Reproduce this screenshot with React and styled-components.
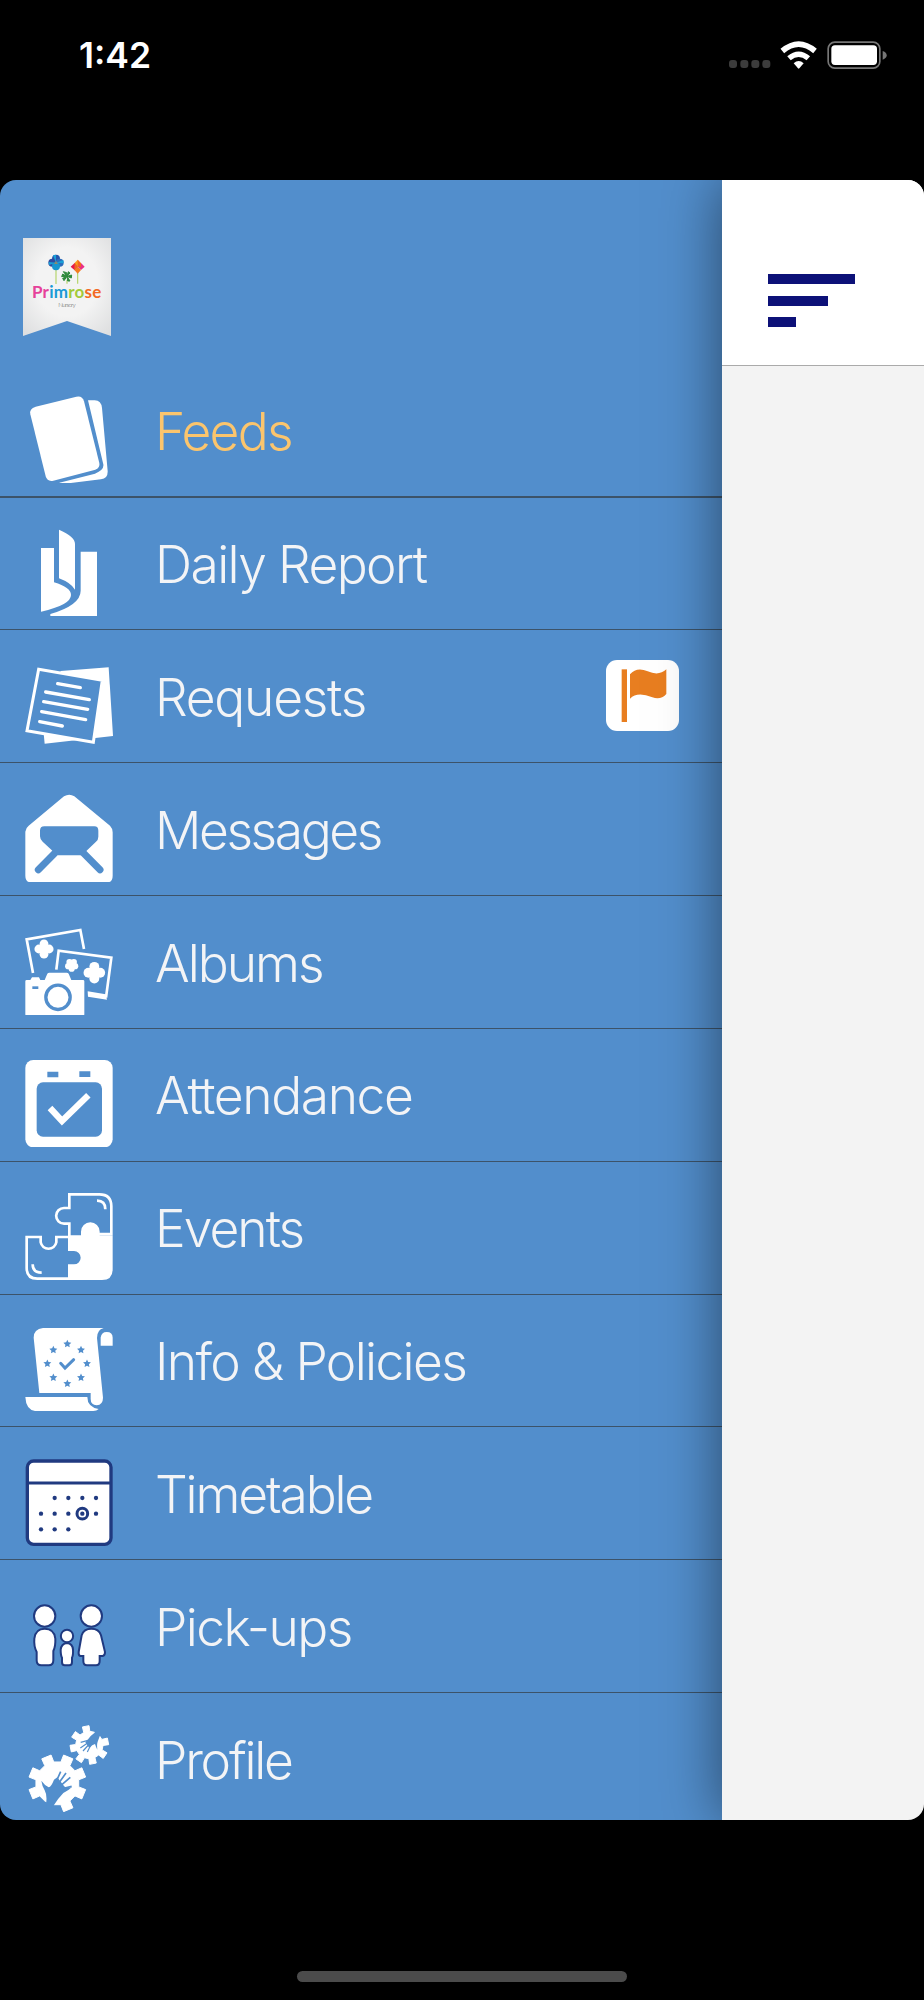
import styled, { createGlobalStyle } from 'styled-components';

const BLUE = '#528ecc';
const NAVY = '#203a80';

const GlobalStyle = createGlobalStyle`
  * {
    box-sizing: border-box;
  }
  body {
    margin: 0;
    background: #000;
  }
  svg {
    display: block;
  }
`;

const SScreen = styled.div`
  display: flex;
  flex-direction: column;
  width: 924px;
  height: 2000px;
  background: #000;
  font-family: Inter, 'Liberation Sans', sans-serif;
`;
const SStatusBar = styled.header`
  display: flex;
  justify-content: space-between;
  height: 180px;
  padding: 34px 37px 0 79px;
`;
const STime = styled.span`
  height: 44px;
  color: #fff;
  font-size: 35.5px;
  font-weight: 600;
  line-height: 44px;
`;
const SStatusIcons = styled.div`
  margin-top: 4px;
`;
const SFrame = styled.div`
  display: flex;
  height: 1640px;
  border-radius: 16px;
  overflow: hidden;
`;
const SDrawer = styled.nav`
  width: 722px;
  background: ${BLUE};
`;
const SDrawerHeader = styled.div`
  height: 184.7px;
  padding: 57.5px 0 0 22.5px;
`;
const SMenu = styled.ul`
  margin: 0;
  padding: 0;
  list-style: none;
`;
const SMenuItem = styled.li`
  display: flex;
  align-items: flex-start;
  height: 132.85px;
  padding: 30.5px 43px 0 25px;
  border-bottom: ${({ $active }) => ($active ? 2 : 1)}px solid #3c5369;
`;
const SLabel = styled.span`
  flex: 1;
  margin: 4px 0 0 42px;
  color: ${({ $active }) => ($active ? '#fbc56d' : '#f3f4f6')};
  font-size: 51.5px;
  font-weight: 300;
  line-height: 64px;
  letter-spacing: ${({ $tracking }) => $tracking}px;
  white-space: nowrap;
`;
const SBadge = styled.span`
  display: flex;
  align-items: center;
  justify-content: center;
  width: 73px;
  height: 71px;
  margin-top: -1px;
  padding: 1px 0 0 2px;
  border-radius: 11px;
  background: #fff;
`;
const SPage = styled.main`
  position: relative;
  flex: 1;
  background: #f3f3f3;
  box-shadow: 0 0 56px rgba(0, 0, 0, 0.5);
`;
const SPageHeader = styled.div`
  height: 186px;
  padding: 94px 0 0 46px;
  background: #fff;
  border-bottom: 1px solid #aaa;
`;
const SHamburger = styled.div`
  display: flex;
  flex-direction: column;
  gap: 11.5px;
`;
const SBar = styled.span`
  width: ${({ $width }) => $width}px;
  height: 10px;
  background: #0d1178;
`;
const SHomeIndicator = styled.div`
  width: 330px;
  height: 11px;
  margin: 151px auto 0;
  border-radius: 6px;
  background: #4b4b4b;
`;

const Icon = ({ origin, children }) => (
  <svg width="88" height="88" viewBox={`75 ${origin} 264 264`} fill="#fff">
    {children}
  </svg>
);

const points = (list) => list.map(([x, y]) => `${x.toFixed(1)},${y.toFixed(1)}`).join(' ');

const polar = (cx, cy, r, deg) => {
  const a = (deg * Math.PI) / 180;
  return [cx + r * Math.cos(a), cy + r * Math.sin(a)];
};

const gear = (cx, cy, inner, outer, offset, skip) => {
  const list = [];
  for (let i = 0; i < 8; i += 1) {
    const a = offset + i * 45;
    list.push(polar(cx, cy, inner, a - 13));
    if (i !== skip) {
      list.push(polar(cx, cy, outer, a - 10), polar(cx, cy, outer, a + 10));
    }
    list.push(polar(cx, cy, inner, a + 13));
  }
  return points(list);
};

const star = (cx, cy) => {
  const list = [];
  for (let i = 0; i < 10; i += 1) {
    list.push(polar(cx, cy, i % 2 ? 6 : 12.5, -90 + i * 36));
  }
  return points(list);
};

const Flower = ({ x, y, r, petals = 4, turn = 0 }) => (
  <g>
    <circle cx={x} cy={y} r={r} />
    {Array.from({ length: petals }, (_, i) => {
      const [cx, cy] = polar(x, y, r, turn - 90 + (i * 360) / petals);
      return <circle key={i} cx={cx} cy={cy} r={r * 0.85} />;
    })}
  </g>
);

const FeedsIcon = () => (
  <Icon origin={524}>
    <path d="M107 559 L229 529 Q247 525 252 543 L298 728 Q301 742 286 748 L160 781 Q142 785 137 768 L91 582 Q87 565 107 559Z" />
    <path d="M264 540 H284 Q304 541 306 563 L323 752 Q324 774 303 777 L196 790 Q185 790 178 787 L285 760 Q316 748 309 728Z" />
  </Icon>
);

const ReportIcon = () => (
  <Icon origin={112}>
    <path d="M123 172 H162 V275 Q213 290 213 313 Q213 343 123 363Z" />
    <path d="M177 117 Q225 137 225 160 V297 Q212 276 177 263Z" />
    <path d="M242 183 H291 V379 H151 V370 Q242 343 242 300Z" />
  </Icon>
);

const RequestsIcon = () => (
  <Icon origin={511}>
    <path d="M182 541 L326 530 L339 736 L134 759 L131 728Z" />
    <path d="M116 536 L307 569 L280 755 L81 720Z" fill={BLUE} stroke="#fff" strokeWidth="9" />
    <path
      d="M173 579 L241 591 M137 604 L268 627 M131 633 L263 656 M125 663 L257 687 M119 693 L187 706"
      stroke="#fff"
      strokeWidth="10"
      strokeLinecap="round"
    />
  </Icon>
);

const MessagesIcon = () => (
  <Icon origin={70}>
    <path d="M76 183 Q77 172 86 165 L192 77 Q208 68 223 77 L330 165 Q338 173 338 185 V315 Q338 336 318 336 H97 Q76 336 76 315Z" />
    <path
      d="M133 167 H283 Q295 167 295 180 V198 Q295 207 288 213 L259 241 L243 254 H174 L158 241 L128 213 Q120 206 120 197 V180 Q120 167 133 167Z"
      fill={BLUE}
    />
    <path d="M115 297 L167 245 M300 297 L248 245" stroke={BLUE} strokeWidth="21" strokeLinecap="round" />
  </Icon>
);

const AlbumsIcon = () => (
  <Icon origin={468}>
    <path d="M99 606 L80 505 L241 477 L252 534" fill="none" stroke="#fff" strokeWidth="8" />
    <path d="M169 596 L176 539 L334 560 L318 680" fill="none" stroke="#fff" strokeWidth="8" />
    <path d="M263 661 L317 670 L321 686 L264 677Z" />
    <Flower x={132} y={534} r={15.5} />
    <Flower x={215} y={582} r={11} petals={5} turn={36} />
    <Flower x={283} y={605} r={17.5} />
    <path d="M80 627 H91 L96 619 H117 L121 627 H134 L142 608 Q144 605 148 605 H200 Q204 605 206 608 L214 627 H249 Q253 627 253 631 V730 Q253 734 249 734 H80 Q76 734 76 730 V631 Q76 627 80 627Z" />
    <rect x="97" y="646" width="18" height="8" fill={BLUE} />
    <circle cx="174" cy="679" r="36.5" fill="none" stroke={BLUE} strokeWidth="10" />
  </Icon>
);

const AttendanceIcon = () => (
  <Icon origin={87}>
    <rect x="76" y="90" width="262" height="262" rx="24" />
    <path d="M142 125 h33 v17 h-33Z M238 124 h33 v17 h-33Z" fill={BLUE} />
    <rect x="110" y="157" width="196" height="163" rx="19" fill={BLUE} />
    <path d="M150 234 L186 273 L265 196" fill="none" stroke="#fff" strokeWidth="19" />
  </Icon>
);

const EventsIcon = () => (
  <Icon origin={486}>
    <g fill="none" stroke="#fff" strokeWidth="8">
      <path d="M208 618 V581 H192 A23 23 0 0 1 192 534 H208 V493 H298 Q334 493 334 529 V612 H296" />
      <path d="M207 621 H169 V637 A24 24 0 0 1 122 637 V621 H80 V714 Q80 746 112 746 H207" />
      <path d="M291 512 Q316 512 316 538 M98 703 Q98 728 125 728" />
    </g>
    <path d="M204 616 H243 V605 A28 28 0 0 1 299 605 V616 H338 V718 Q338 750 306 750 H204 V703 H222 A20 20 0 0 0 222 663 H204Z" />
  </Icon>
);

const InfoIcon = () => (
  <Icon origin={74}>
    <path d="M129 83 H311 Q291 88 291 113 L309 292 Q309 313 290 315 Q272 313 272 296 V278 H118 L101 112 Q101 86 129 83Z" />
    <path d="M302 136 V112 Q304 95 320 95 Q338 95 338 112 V136Z" />
    <path d="M76 290 H262 Q262 320 296 326 Q290 332 280 332 H105 Q78 328 76 290Z" />
    <g fill={BLUE}>
      {[[202, 131], [243, 149], [261, 190], [243, 232], [202, 250], [160, 232], [142, 190], [160, 149]].map(([x, y]) => (
        <polygon key={`${x}-${y}`} points={star(x, y)} />
      ))}
    </g>
    <path d="M182 189 L195 203 L221 178" fill="none" stroke={BLUE} strokeWidth="9" strokeLinecap="round" />
  </Icon>
);

const TimetableIcon = () => (
  <Icon origin={473}>
    <rect x="82" y="482" width="251" height="250" rx="19" stroke={NAVY} strokeWidth="10" />
    <path d="M82 548 H333" stroke={NAVY} strokeWidth="9" />
    <g fill={NAVY}>
      {[[164, 593], [205, 593], [247, 593], [288, 593], [123, 640], [164, 640], [205, 640], [247, 640], [288, 640], [123, 687], [164, 687], [205, 687]].map(([x, y]) => (
        <circle key={`${x}-${y}`} cx={x} cy={y} r="6.5" />
      ))}
    </g>
    <circle cx="247" cy="640" r="16" fill="none" stroke={NAVY} strokeWidth="9" />
  </Icon>
);

const PickupsIcon = () => (
  <Icon origin={92}>
    <g stroke={NAVY} strokeWidth="6">
      <circle cx="134" cy="167" r="32" />
      <path d="M134 205 Q163 205 166 235 Q167 258 160 272 V300 Q160 315 146 315 H124 Q110 315 110 300 V275 Q101 258 103 235 Q106 205 134 205Z" />
      <circle cx="201" cy="227" r="18.5" />
      <path d="M201 248 Q218 250 219 268 Q220 285 216 292 V305 Q216 315 208 315 H194 Q186 315 186 305 V292 Q182 285 182 268 Q184 250 201 248Z" />
      <circle cx="274" cy="167" r="32" />
      <path d="M274 205 Q297 205 303 225 L315 275 Q315 286 308 287 H299 V302 Q299 315 288 315 H261 Q250 315 250 302 V287 H241 Q235 286 236 275 L245 225 Q251 205 274 205Z" />
    </g>
  </Icon>
);

const ProfileIcon = () => (
  <Icon origin={490}>
    <polygon points={gear(172, 668, 65, 87, 22.5, 2)} stroke="#fff" strokeWidth="3" strokeLinejoin="round" />
    <path d="M139 722 Q141 702 134 689 Q126 675 124 660 Q134 674 146 680 Q154 678 162 657 L172 650 L192 676 Q198 686 216 679 Q205 690 190 697 Q175 712 160 736 L140 748Z" fill={BLUE} />
    <path d="M168 664 L182 633 M176 668 L198 637 M183 674 L211 650 M188 684 L215 677" stroke={BLUE} strokeWidth="5" />
    <polygon points={gear(268, 553, 41, 58, -11, 7)} stroke="#fff" strokeWidth="3" strokeLinejoin="round" />
    <path d="M292 504 L283 517 Q270 526 263 537 L256 545 L268 562 Q277 551 285 550 Q288 560 292 567 Q290 550 293 543 L299 527 L306 518Z" fill={BLUE} />
    <path d="M264 539 L242 545 M266 545 L241 562 M268 550 L249 571 M272 554 L262 574" stroke={BLUE} strokeWidth="3.5" />
  </Icon>
);

const FlagIcon = () => (
  <svg width="46" height="53" viewBox="186 212 138 159" fill="#e87e20">
    <rect x="188" y="213" width="16" height="158" />
    <path d="M213 228 Q233 205 266 219 Q300 234 322 213 V287 Q305 306 280 297 Q235 278 213 301Z" />
  </svg>
);

const Logo = () => (
  <svg width="88" height="98" viewBox="67 52 264 294">
    <defs>
      <radialGradient id="paper" cx="50%" cy="45%" r="70%">
        <stop offset="0.5" stopColor="#f3f3f3" />
        <stop offset="1" stopColor="#dedfe0" />
      </radialGradient>
    </defs>
    <path d="M67 52 H331 V346 L199 301 L67 346Z" fill="url(#paper)" />
    <path d="M166 146 V190 M231 155 V189 M199 178 V189" stroke="#b5d56a" strokeWidth="3.5" />
    <g fill="#2456ae">
      <circle cx="166" cy="114" r="12" />
      <circle cx="155" cy="126" r="12" fill="#2e4ba0" />
      <circle cx="177" cy="126" r="12" fill="#2b6cbb" />
      <circle cx="166" cy="137" r="12" fill="#1795cf" />
      <path d="M166 126 L157 104 L166 102Z M166 126 L188 118 L189 128Z M166 126 L145 133 L144 124Z" fill="#18a0d8" />
      <path d="M166 120 L172 130 H160Z" fill="#8a8a70" />
    </g>
    <path d="M231 117 L241 128 L231 138 L221 128Z" fill="#f9a01b" />
    <path d="M222 127 L231 138 L222 149 L210 138Z" fill="#e5194b" />
    <path d="M241 127 L252 138 L241 148 L231 138Z" fill="#ea2f86" />
    <path d="M231 138 L241 148 L231 159 L221 148Z" fill="#f47b20" />
    <path d="M231 117 V138 H241 V128Z M222 127 L231 138 L221 148Z" fill="#f26522" />
    <path d="M199 167 L188 153 L198 156Z M199 167 L203 153 L208 157Z M199 167 L213 163 L212 172Z M199 167 L208 181 L201 181Z M199 167 L190 180 L186 173Z M199 167 L183 168 L186 160Z" fill="#2f8a3c" stroke="#2f8a3c" strokeWidth="3" />
    <text x="94" y="231" textLength="208" fontFamily="Lato, sans-serif" fontSize="51" fontWeight="700">
      <tspan fill="#e6429a">Pr</tspan>
      <tspan fill="#1b9ad6">im</tspan>
      <tspan fill="#a2ca3a">ro</tspan>
      <tspan fill="#f26a23">se</tspan>
    </text>
    <text x="173" y="258" textLength="52" fontFamily="Lato, sans-serif" fontSize="19" fontWeight="300" fill="#555">
      Nursery
    </text>
  </svg>
);

const StatusIcons = () => (
  <svg width="160" height="36" viewBox="0 0 480 108">
    <g fill="#3c3c3c">
      <rect x="6" y="66" width="24" height="24" rx="9" />
      <rect x="40" y="66" width="24" height="24" rx="9" />
      <rect x="73" y="66" width="24" height="24" rx="9" />
      <rect x="106" y="66" width="24" height="24" rx="9" />
    </g>
    <g fill="none" stroke="#fff">
      <path d="M166 39 Q215 -2 264 39" strokeWidth="17" />
      <path d="M186 61 Q215 36 244 61" strokeWidth="16" />
    </g>
    <path d="M200 76 Q215 62 230 76 L217 91 Q215 93 213 91Z" fill="#fff" />
    <rect x="303.5" y="12.5" width="155" height="78" rx="20" fill="none" stroke="#777" strokeWidth="5" />
    <rect x="313" y="22" width="137" height="59" rx="11" fill="#fff" />
    <path d="M467 39 Q479 43 479 52 Q479 61 467 65Z" fill="#777" />
  </svg>
);

const items = [
  { label: 'Feeds', icon: FeedsIcon, active: true, tracking: -1.75 },
  { label: 'Daily Report', icon: ReportIcon, tracking: -1.6 },
  { label: 'Requests', icon: RequestsIcon, tracking: -1.25 },
  { label: 'Messages', icon: MessagesIcon, tracking: -2.4 },
  { label: 'Albums', icon: AlbumsIcon, tracking: -2 },
  { label: 'Attendance', icon: AttendanceIcon, tracking: -1.4 },
  { label: 'Events', icon: EventsIcon, tracking: -1.95 },
  { label: 'Info & Policies', icon: InfoIcon, tracking: -1.65 },
  { label: 'Timetable', icon: TimetableIcon, tracking: -2.15 },
  { label: 'Pick-ups', icon: PickupsIcon, tracking: -1.55 },
  { label: 'Profile', icon: ProfileIcon, tracking: -2.2 },
];
const flagged = 'Requests';

function App() {
  return (
    <SScreen>
      <GlobalStyle />
      <SStatusBar>
        <STime>1:42</STime>
        <SStatusIcons>
          <StatusIcons />
        </SStatusIcons>
      </SStatusBar>
      <SFrame>
        <SDrawer>
          <SDrawerHeader>
            <Logo />
          </SDrawerHeader>
          <SMenu>
            {items.map(({ label, icon: ItemIcon, active, tracking }) => (
              <SMenuItem key={label} $active={active}>
                <ItemIcon />
                <SLabel $active={active} $tracking={tracking}>
                  {label}
                </SLabel>
                {label === flagged && (
                  <SBadge>
                    <FlagIcon />
                  </SBadge>
                )}
              </SMenuItem>
            ))}
          </SMenu>
        </SDrawer>
        <SPage>
          <SPageHeader>
            <SHamburger>
              <SBar $width={87} />
              <SBar $width={60} />
              <SBar $width={28} />
            </SHamburger>
          </SPageHeader>
        </SPage>
      </SFrame>
      <SHomeIndicator />
    </SScreen>
  );
}

export default App;
